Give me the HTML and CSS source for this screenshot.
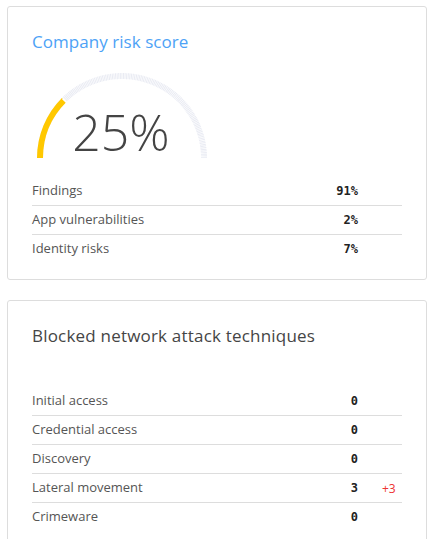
FILE: index.html
```html
<!DOCTYPE html>
<html>
<head>
<meta charset="utf-8">
<link rel="stylesheet" href="styles.css">
</head>
<body>
<section class="card card-risk">
  <h2 class="card-title title-blue">Company risk score</h2>
  <div class="gauge">
    <svg class="gauge-svg" width="180" height="88" viewBox="0 0 180 88">
      <path d="M8 85 A82 82 0 0 1 172 85" fill="none" stroke="#e9ebf3" stroke-width="6" stroke-dasharray="1 0.6"/>
      <path d="M8 85 A82 82 0 0 1 32.02 27.02" fill="none" stroke="#ffc800" stroke-width="6"/>
      <line x1="30.6" y1="25.6" x2="34.8" y2="29.8" stroke="#ffffff" stroke-width="1.6"/>
    </svg>
    <div class="gauge-value">25%</div>
  </div>
  <div class="rows">
    <div class="row"><span class="label">Findings</span><span class="value">91%</span><span class="delta"></span></div>
    <div class="row"><span class="label">App vulnerabilities</span><span class="value">2%</span><span class="delta"></span></div>
    <div class="row"><span class="label">Identity risks</span><span class="value">7%</span><span class="delta"></span></div>
  </div>
</section>
<section class="card card-blocked">
  <h2 class="card-title title-dark title-wide">Blocked network attack techniques</h2>
  <div class="rows rows-blocked">
    <div class="row"><span class="label">Initial access</span><span class="value">0</span><span class="delta"></span></div>
    <div class="row"><span class="label">Credential access</span><span class="value">0</span><span class="delta"></span></div>
    <div class="row"><span class="label">Discovery</span><span class="value">0</span><span class="delta"></span></div>
    <div class="row"><span class="label">Lateral movement</span><span class="value">3</span><span class="delta">+3</span></div>
    <div class="row"><span class="label">Crimeware</span><span class="value">0</span><span class="delta"></span></div>
  </div>
</section>
</body>
</html>
```

FILE: styles.css
```css
html, body {
  margin: 0;
  background: #ffffff;
}
body {
  padding: 6px 8px 0 7px;
  font-family: "Open Sans", "Liberation Sans", sans-serif;
  color: #555555;
  display: flex;
  flex-direction: column;
  gap: 20px;
}
.card {
  border: 1px solid #dddddd;
  border-radius: 3px;
  padding: 23px 24px 16px 24px;
  background: #ffffff;
}
.card-title {
  margin: 0;
  font-weight: 400;
  font-size: 17px;
  line-height: 24px;
  letter-spacing: 0.05px;
}
.title-wide {
  letter-spacing: 0.2px;
}
.title-blue { color: #4da2f6; }
.title-dark { color: #454545; }
.gauge {
  position: relative;
  width: 180px;
  height: 88px;
  margin-top: 19px;
  display: flex;
  justify-content: center;
  align-items: flex-end;
}
.gauge-svg {
  position: absolute;
  left: 0;
  top: 0;
}
.gauge-value {
  position: relative;
  font-size: 50px;
  font-weight: 300;
  line-height: 50px;
  color: #444444;
  margin-bottom: 4px;
  margin-right: 2px;
}
.rows {
  margin-top: 16px;
}
.rows-blocked {
  margin-top: 39px;
}
.row {
  display: grid;
  grid-template-columns: 1fr auto 44px;
  align-items: center;
  height: 28px;
  border-bottom: 1px solid #dddddd;
}
.row:last-child {
  border-bottom: none;
}
.label {
  font-size: 13px;
  line-height: 18px;
  color: #555555;
  padding-bottom: 2px;
}
.value {
  font-family: "DejaVu Sans Mono", "Liberation Mono", monospace;
  font-weight: 700;
  font-size: 12px;
  color: #222222;
  text-align: right;
}
.delta {
  padding-left: 24px;
  font-size: 12px;
  color: #ee3333;
}
```
